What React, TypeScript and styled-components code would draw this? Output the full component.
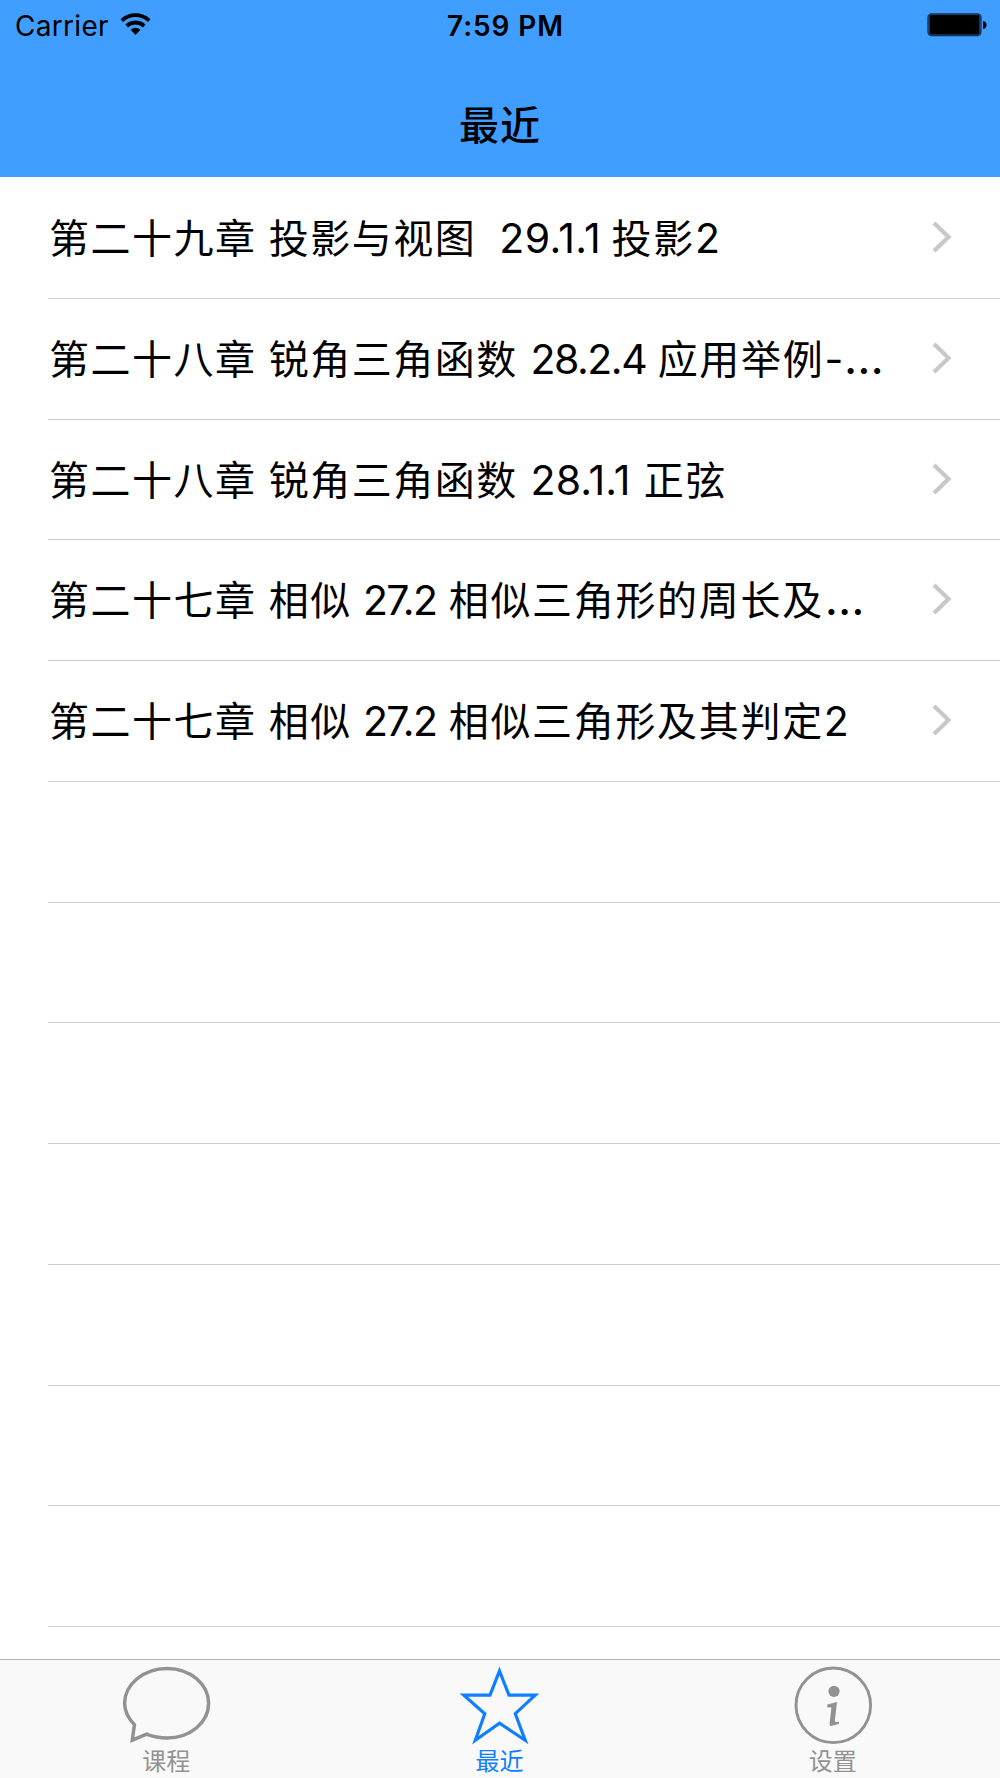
import React from 'react';
import styled, { createGlobalStyle } from 'styled-components';

const GlobalStyle = createGlobalStyle`
  * { box-sizing: border-box; }
  body { margin: 0; background: #fff; }
`;

const Screen = styled.div`
  width: 1000px;
  height: 1778px;
  display: flex;
  flex-direction: column;
  overflow: hidden;
  background: #fff;
  color: #000;
  font-family: Inter, 'Noto Sans CJK SC', sans-serif;
`;

const Header = styled.header`
  height: 177px;
  flex: none;
  display: flex;
  flex-direction: column;
  background: #3f9eff;
`;

const StatusBar = styled.div`
  height: 50px;
  display: grid;
  grid-template-columns: 1fr auto 1fr;
  align-items: center;
  padding: 0 13px 0 15px;
  line-height: 48px;
`;

const Carrier = styled.div`
  display: flex;
  align-items: center;
  gap: 11px;
  padding-top: 1px;
  font-size: 28px;
  letter-spacing: 0.3px;
`;

const Wifi = styled.svg`
  margin-bottom: 2px;
`;

const Time = styled.div`
  padding: 2px 0 0 9px;
  font-weight: 600;
  font-size: 28px;
  letter-spacing: 0.9px;
`;

const Battery = styled.svg`
  justify-self: end;
`;

const Title = styled.h1`
  margin: 0;
  height: 127px;
  padding: 26px 0 0;
  text-align: center;
  font-size: 40px;
  font-weight: 500;
  letter-spacing: 1px;
  line-height: 100px;
`;

const List = styled.ul`
  flex: 1;
  min-height: 0;
  margin: 0;
  padding: 1px 0 0;
  list-style: none;
  overflow: hidden;
`;

const Row = styled.li`
  height: 120.78px;
  padding-left: 48px;
`;

const RowBody = styled.div`
  height: 100%;
  display: flex;
  align-items: center;
  justify-content: space-between;
  padding: 0 48px 0 1px;
  border-bottom: 1px solid #cfcfd2;
`;

const Label = styled.span`
  padding-top: 1.6px;
  font-size: 41px;
  line-height: 60px;
  white-space: pre;
`;

const Han = styled.span<{ $tracking?: number }>`
  font-size: 40px;
  letter-spacing: ${(p) => p.$tracking ?? 1.48}px;
`;

const Space = styled.span`
  letter-spacing: 0.8px;
`;

const Section = styled.span<{ $tracking: number; $before: number; $after: number }>`
  margin-left: ${(p) => p.$before}px;
  margin-right: ${(p) => p.$after}px;
  letter-spacing: ${(p) => p.$tracking}px;
`;

const Ellipsis = styled.span`
  margin-left: 0.8px;
  font-size: 46px;
  line-height: 1;
`;

const Disclosure = styled.svg`
  margin-bottom: 1.6px;
`;

const TabBar = styled.nav`
  height: 119px;
  flex: none;
  display: grid;
  grid-template-columns: repeat(3, 1fr);
  border-top: 1px solid #b4b4b4;
  background: #f9f9f9;
`;

const Tab = styled.div<{ $active?: boolean }>`
  display: flex;
  flex-direction: column;
  align-items: center;
  padding-right: 1px;
  color: ${(p) => (p.$active ? '#0f7fff' : '#929292')};
  font-size: 24px;
  line-height: 30px;
`;

const TabIcon = styled.svg`
  display: block;
  width: 90px;
  height: 87px;
`;

interface Lesson {
  chapter: string;
  topic: string;
  gap: string;
  section: string;
  tracking: number;
  before: number;
  after: number;
  name: string;
  suffix?: string;
  truncated?: boolean;
}

const lessons: Lesson[] = [
  { chapter: '第二十九章', topic: '投影与视图', gap: '  ', section: '29.1.1', tracking: 0.4, before: -1.5, after: -1, name: '投影', suffix: '2' },
  { chapter: '第二十八章', topic: '锐角三角函数', gap: ' ', section: '28.2.4', tracking: -1.5, before: 0.6, after: 0, name: '应用举例', suffix: '-', truncated: true },
  { chapter: '第二十八章', topic: '锐角三角函数', gap: ' ', section: '28.1.1', tracking: 0.1, before: 0.6, after: 1.6, name: '正弦' },
  { chapter: '第二十七章', topic: '相似', gap: ' ', section: '27.2', tracking: -1.6, before: -1.2, after: 0.8, name: '相似三角形的周长及', truncated: true },
  { chapter: '第二十七章', topic: '相似', gap: ' ', section: '27.2', tracking: -1.6, before: -1.2, after: 0.8, name: '相似三角形及其判定', suffix: '2' },
];

function LessonLabel({ lesson }: { lesson: Lesson }) {
  return (
    <Label>
      <Han>{lesson.chapter}</Han>
      <Space> </Space>
      <Han>{lesson.topic}</Han>
      <Space>{lesson.gap}</Space>
      <Section $tracking={lesson.tracking} $before={lesson.before} $after={lesson.after}>
        {lesson.section}
      </Section>
      <span> </span>
      <Han $tracking={1.68}>{lesson.name}</Han>
      {lesson.suffix}
      {lesson.truncated && <Ellipsis>…</Ellipsis>}
    </Label>
  );
}

function Chevron() {
  return (
    <Disclosure width="20" height="32" viewBox="0 0 20 32" fill="none" stroke="#c7c7cc" strokeWidth="4.2">
      <path d="M2 2 L16.5 16 L2 30" />
    </Disclosure>
  );
}

export default function App() {
  return (
    <Screen>
      <GlobalStyle />
      <Header>
        <StatusBar>
          <Carrier>
            Carrier
            <Wifi width="31" height="23" viewBox="0 0 31 23" fill="none" stroke="#000" strokeWidth="3.8">
              <path d="M1.8 7.6 A20 20 0 0 1 29.2 7.6" />
              <path d="M6.7 13 A12.8 12.8 0 0 1 24.3 13" />
              <path d="M10.6 16.8 A7 7 0 0 1 20.4 16.8 L15.5 22 Z" fill="#000" stroke="none" />
            </Wifi>
          </Carrier>
          <Time>7:59 PM</Time>
          <Battery width="60" height="24" viewBox="0 0 60 24">
            <rect x="1" y="1" width="53" height="21.5" rx="3.5" fill="#2a6aab" stroke="#0e3154" strokeWidth="1.3" />
            <rect x="2.5" y="2" width="50" height="19.5" rx="1.5" />
            <path d="M56 8 Q59.5 8.5 59.5 12 Q59.5 15.5 56 16 Z" />
          </Battery>
        </StatusBar>
        <Title>最近</Title>
      </Header>
      <List>
        {Array.from({ length: 12 }, (_, i) => (
          <Row key={i}>
            <RowBody>
              {lessons[i] && (
                <>
                  <LessonLabel lesson={lessons[i]} />
                  <Chevron />
                </>
              )}
            </RowBody>
          </Row>
        ))}
      </List>
      <TabBar>
        <Tab>
          <TabIcon viewBox="0 0 90 87" fill="none" stroke="currentColor" strokeWidth="3.5">
            <path d="M13.4 64.8 C7 58 3.6 50.5 3.6 43.3 C3.6 24.3 22.6 8.4 46 8.4 C69.6 8.4 87.6 24.3 87.6 43.3 C87.6 62.3 69.6 78 46 78 C38.6 78 31.6 76.5 25.6 74.1 L11.3 80.2 Z" />
          </TabIcon>
          课程
        </Tab>
        <Tab $active>
          <TabIcon viewBox="0 0 90 87" fill="none" stroke="currentColor" strokeWidth="3.2">
            <path d="M45.5 11 L55 35.2 H81.2 L61.3 53.7 L71.2 80.3 L45.5 63.2 L21.3 80.3 L30.8 53.7 L9.8 35.2 H36 Z" />
          </TabIcon>
          最近
        </Tab>
        <Tab>
          <TabIcon viewBox="0 0 90 87" fill="none" stroke="currentColor">
            <circle cx="45.3" cy="45.3" r="37.3" strokeWidth="2.9" />
            <circle cx="46" cy="31.3" r="5.6" fill="currentColor" stroke="none" />
            <path
              d="M39.3 44.6 L49 42 L46.8 61 Q46.8 62.6 51 61.8 L50.8 64 L43 66 Q41.2 66.2 41.6 63.5 L43.4 47.4 L39.3 47.2 Z"
              fill="currentColor"
              stroke="none"
            />
          </TabIcon>
          设置
        </Tab>
      </TabBar>
    </Screen>
  );
}
